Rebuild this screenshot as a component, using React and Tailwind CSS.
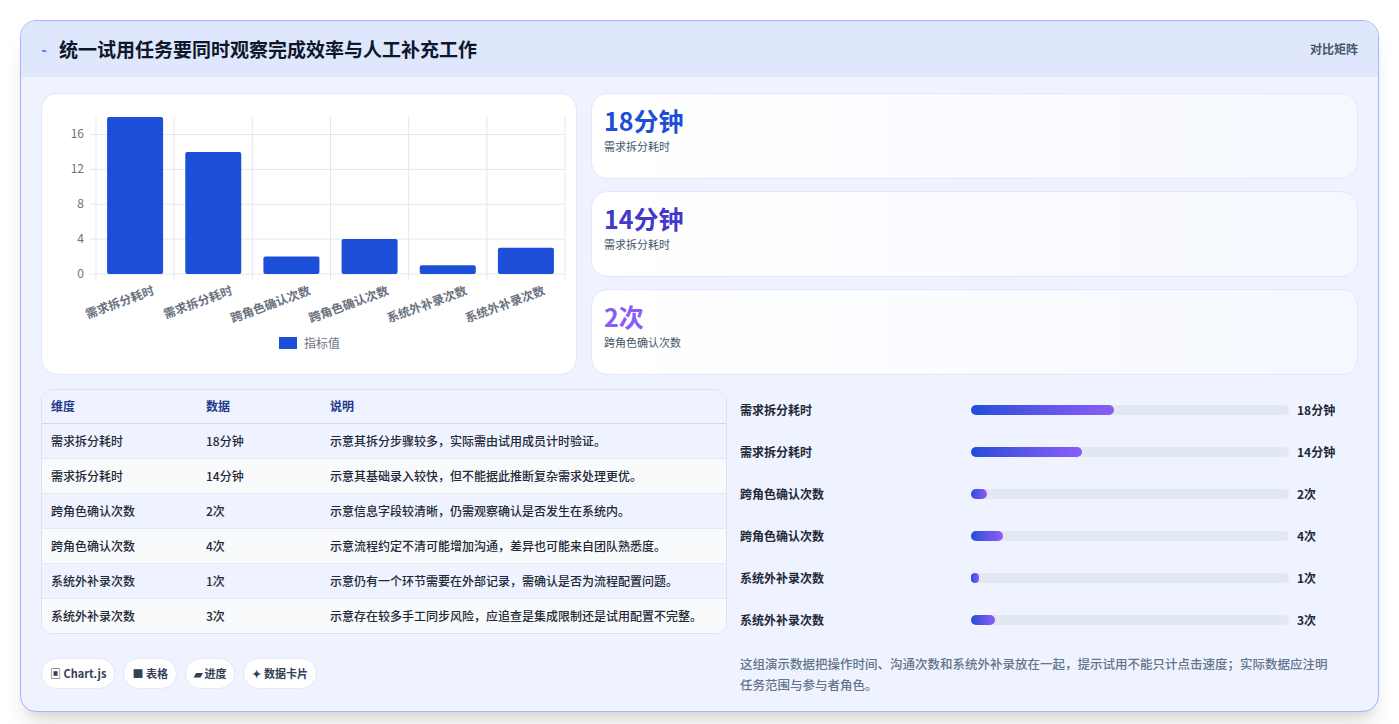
const rows = [
  { name: "需求拆分耗时", value: 18, unit: "分钟", note: "示意其拆分步骤较多，实际需由试用成员计时验证。" },
  { name: "需求拆分耗时", value: 14, unit: "分钟", note: "示意其基础录入较快，但不能据此推断复杂需求处理更优。" },
  { name: "跨角色确认次数", value: 2, unit: "次", note: "示意信息字段较清晰，仍需观察确认是否发生在系统内。" },
  { name: "跨角色确认次数", value: 4, unit: "次", note: "示意流程约定不清可能增加沟通，差异也可能来自团队熟悉度。" },
  { name: "系统外补录次数", value: 1, unit: "次", note: "示意仍有一个环节需要在外部记录，需确认是否为流程配置问题。" },
  { name: "系统外补录次数", value: 3, unit: "次", note: "示意存在较多手工同步风险，应追查是集成限制还是试用配置不完整。" },
];

const font = { fontFamily: '"Noto Sans CJK SC", "Noto Sans", sans-serif' };

function Chart() {
  // plot area: x 54..523, y 23..180 inside svg (origin at card 40,93)
  const x0 = 54, x1 = 523, yb = 180, scale = 8.72;
  const band = (x1 - x0) / 6;
  return (
    <svg width="535" height="279" className="block">
      {[0, 4, 8, 12, 16].map((t) => (
        <g key={t}>
          <line x1={x0 - 6} x2={x1} y1={yb - t * scale} y2={yb - t * scale} stroke="#e5e7eb" />
          <text x={x0 - 12} y={yb - t * scale + 4} textAnchor="end" fontSize="12" fill="#6b7280">{t}</text>
        </g>
      ))}
      {[0, 1, 2, 3, 4, 5, 6].map((i) => (
        <line key={i} x1={x0 + i * band} x2={x0 + i * band} y1={23} y2={yb + 6} stroke="#e5e7eb" />
      ))}
      {rows.map((r, i) => {
        const h = r.value * scale;
        const cx = x0 + band * i + band / 2;
        return (
          <g key={i}>
            <rect x={cx - 28} y={yb - h} width="56" height={h} rx="2" fill="#1d4ed8" />
            <text x={cx + 20} y={yb + 20} textAnchor="end" fontSize="12" fontWeight="600" fill="#6b7280"
              transform={`rotate(-20 ${cx + 20} ${yb + 20})`}>{r.name}</text>
          </g>
        );
      })}
      <rect x="237" y="243" width="18" height="12" fill="#1d4ed8" />
      <text x="262" y="254" fontSize="12" fill="#6b7280">指标值</text>
    </svg>
  );
}

const StatCard = ({ value, label, color }) => (
  <div className="h-[86px] rounded-2xl border border-[#e0e7ff] bg-gradient-to-r from-white to-[#f5f8ff] px-3 pt-2">
    <div className={`text-[25px] font-bold leading-[36px] ${color}`}>{value}</div>
    <div className="text-[11px] text-[#475569]">{label}</div>
  </div>
);

export default function App() {
  return (
    <div className="min-h-screen bg-white p-5" style={font}>
      <div className="overflow-hidden rounded-2xl border border-[#a5b4fc] bg-[#eef3ff] shadow-xl">
        {/* header */}
        <div className="flex h-14 items-center justify-between bg-[#dfe7fd] px-5">
          <div className="flex items-center gap-3">
            <span className="text-[10px] text-[#2563eb]">⌁</span>
            <h1 className="text-[19px] font-bold text-[#0f172a]">统一试用任务要同时观察完成效率与人工补充工作</h1>
          </div>
          <span className="text-xs font-semibold text-[#475569]">对比矩阵</span>
        </div>

        <div className="px-5 pt-4 pb-4">
          {/* top row */}
          <div className="flex gap-[14px]">
            <div className="w-[536px] shrink-0 rounded-2xl border border-[#e0e7ff] bg-white">
              <Chart />
            </div>
            <div className="flex flex-1 flex-col gap-3">
              <StatCard value="18分钟" label="需求拆分耗时" color="text-[#1d4ed8]" />
              <StatCard value="14分钟" label="需求拆分耗时" color="text-[#4338ca]" />
              <StatCard value="2次" label="跨角色确认次数" color="text-[#8b5cf6]" />
            </div>
          </div>

          {/* bottom row */}
          <div className="mt-[14px] flex gap-[13px]">
            <div className="w-[686px] shrink-0">
              <div className="overflow-hidden rounded-xl border border-[#dbe3f3] bg-white">
                <table className="w-full text-left text-xs">
                  <thead>
                    <tr className="h-[33px] border-b border-[#d1d9ea] bg-[#eef3ff] text-[#1e3a8a]">
                      <th className="w-[164px] pl-[9px] font-semibold">维度</th>
                      <th className="w-[124px] font-semibold">数据</th>
                      <th className="font-semibold">说明</th>
                    </tr>
                  </thead>
                  <tbody className="font-medium text-[#1f2937]">
                    {rows.map((r, i) => (
                      <tr key={i} className={`h-[35px] border-b border-[#e5e9f2] last:border-b-0 ${i % 2 === 0 ? "bg-[#eef3ff]" : "bg-[#f8fafc]"}`}>
                        <td className="pl-[9px]">{r.name}</td>
                        <td>{r.value}{r.unit}</td>
                        <td>{r.note}</td>
                      </tr>
                    ))}
                  </tbody>
                </table>
              </div>
              <div className="mt-6 flex gap-2 text-[11px] font-semibold text-[#334155]">
                <span className="rounded-full border border-[#e5e9f2] bg-white px-2 py-[6px]">▣ Chart.js</span>
                <span className="rounded-full border border-[#e5e9f2] bg-white px-2 py-[6px]">■ 表格</span>
                <span className="rounded-full border border-[#e5e9f2] bg-white px-2 py-[6px]">▰ 进度</span>
                <span className="rounded-full border border-[#e5e9f2] bg-white px-2 py-[6px]">✦ 数据卡片</span>
              </div>
            </div>

            <div className="flex-1 pr-5">
              <div className="flex flex-col">
                {rows.map((r, i) => (
                  <div key={i} className="flex h-[42px] items-center text-xs font-semibold text-[#1f2937]">
                    <span className="w-[231px]">{r.name}</span>
                    <div className="h-[10px] w-[318px] rounded-full bg-[#e2e8f0]">
                      <div className="h-full rounded-full bg-gradient-to-r from-[#1d4ed8] to-[#8b5cf6]"
                        style={{ width: `${(r.value / 40) * 100}%` }} />
                    </div>
                    <span className="ml-2">{r.value}{r.unit}</span>
                  </div>
                ))}
              </div>
              <p className="mt-3 text-[12.5px] leading-[21px] font-medium text-[#64748b]">
                这组演示数据把操作时间、沟通次数和系统外补录放在一起，提示试用不能只计点击速度；实际数据应注明任务范围与参与者角色。
              </p>
            </div>
          </div>
        </div>
      </div>
    </div>
  );
}
